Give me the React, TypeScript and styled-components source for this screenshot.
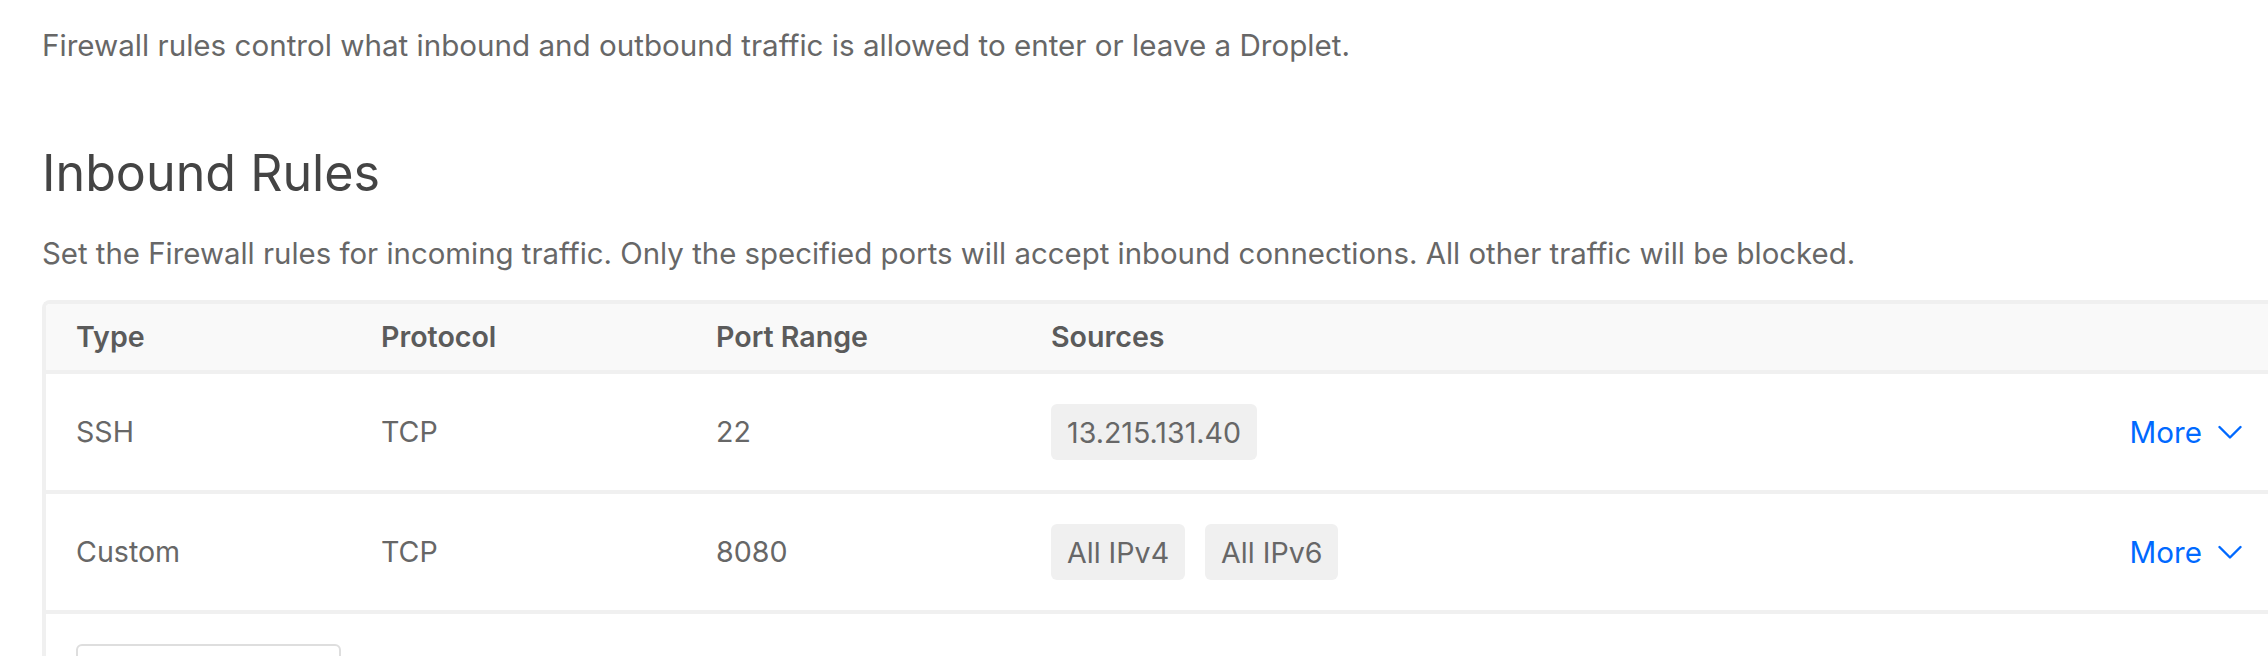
import React from "react";
import styled, { createGlobalStyle } from "styled-components";

const GlobalStyle = createGlobalStyle`
  html, body {
    margin: 0;
    padding: 0;
    overflow: hidden;
    background: #ffffff;
  }
  body {
    font-family: Inter, "Open Sans", sans-serif;
    color: #676767;
  }
`;

const Page = styled.main`
  padding: 25px 0 0 42px;
  width: 2230px;
`;

const Intro = styled.p`
  margin: 0;
  font-size: 29.6px;
  line-height: 40px;
  color: #676767;
`;

const Heading = styled.h2`
  margin: 78px 0 0;
  font-size: 50.2px;
  line-height: 60px;
  font-weight: 400;
  color: #444444;
`;

const Subtitle = styled.p`
  margin: 31px 0 0;
  font-size: 29.4px;
  line-height: 40px;
  color: #676767;
`;

const Table = styled.section`
  margin-top: 26px;
  border: 4px solid #f0f0f0;
  border-right: none;
  border-radius: 8px 0 0 0;
  overflow: hidden;
`;

const Grid = styled.div<{ $header?: boolean }>`
  display: grid;
  grid-template-columns: 305px 335px 335px 1fr auto;
  align-items: center;
  padding: 0 30px;
  height: ${(p) => (p.$header ? "66px" : "116px")};
  background: ${(p) => (p.$header ? "#f9f9f9" : "#ffffff")};
  border-bottom: 4px solid #f0f0f0;
`;

const HeadCell = styled.div`
  font-size: 28.6px;
  line-height: 40px;
  font-weight: 600;
  color: #5b5b5b;
`;

const Cell = styled.div`
  font-size: 28.6px;
  line-height: 40px;
  color: #676767;
`;

const Tags = styled.div`
  display: flex;
  gap: 20px;
`;

const Tag = styled.span`
  display: inline-flex;
  align-items: center;
  height: 56px;
  padding: 0 16px;
  border-radius: 6px;
  background: #f0f0f0;
  font-size: 28.6px;
  color: #676767;
`;

const MoreButton = styled.button`
  display: flex;
  align-items: center;
  gap: 16px;
  border: none;
  background: none;
  padding: 0;
  font-family: inherit;
  font-size: 29.6px;
  line-height: 40px;
  color: #0069ff;
  cursor: pointer;
`;

const Chevron = styled.svg`
  width: 24px;
  height: 15px;
  display: block;
`;

const FooterRow = styled.div`
  padding: 30px 30px 40px;
`;

const AddButton = styled.button`
  display: block;
  width: 265px;
  height: 58px;
  border: 2px solid #dedede;
  border-radius: 6px;
  background: #ffffff;
`;

type Rule = { type: string; protocol: string; port: string; sources: string[] };

const rules: Rule[] = [
  { type: "SSH", protocol: "TCP", port: "22", sources: ["13.215.131.40"] },
  { type: "Custom", protocol: "TCP", port: "8080", sources: ["All IPv4", "All IPv6"] },
];

export default function App() {
  return (
    <>
      <GlobalStyle />
      <Page>
        <Intro>
          Firewall rules control what inbound and outbound traffic is allowed to enter or leave a Droplet.
        </Intro>
        <Heading>Inbound Rules</Heading>
        <Subtitle>
          Set the Firewall rules for incoming traffic. Only the specified ports will accept inbound
          connections. All other traffic will be blocked.
        </Subtitle>
        <Table>
          <Grid $header>
            <HeadCell>Type</HeadCell>
            <HeadCell>Protocol</HeadCell>
            <HeadCell>Port Range</HeadCell>
            <HeadCell>Sources</HeadCell>
            <div />
          </Grid>
          {rules.map((r) => (
            <Grid key={r.type}>
              <Cell>{r.type}</Cell>
              <Cell>{r.protocol}</Cell>
              <Cell>{r.port}</Cell>
              <Tags>
                {r.sources.map((s) => (
                  <Tag key={s}>{s}</Tag>
                ))}
              </Tags>
              <MoreButton type="button">
                More
                <Chevron viewBox="0 0 24 15" fill="none">
                  <polyline
                    points="1.5,2 12,12.5 22.5,2"
                    stroke="#0069ff"
                    strokeWidth="2.4"
                    strokeLinecap="round"
                    strokeLinejoin="round"
                  />
                </Chevron>
              </MoreButton>
            </Grid>
          ))}
          <FooterRow>
            <AddButton type="button" aria-label="New rule" />
          </FooterRow>
        </Table>
      </Page>
    </>
  );
}
